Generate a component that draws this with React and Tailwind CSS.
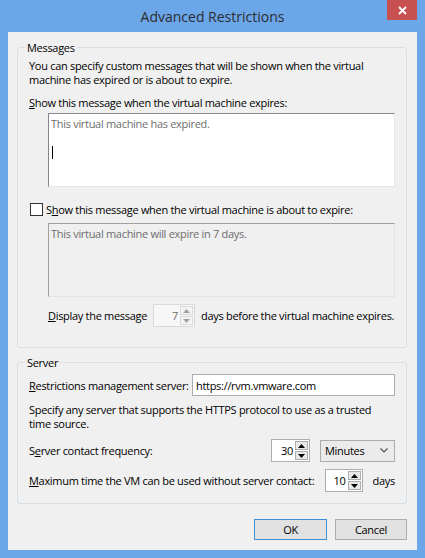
import React from "react";

function Spinner({ value, disabled, width }) {
  return (
    <div
      className={`flex h-[23px] border ${width} ${
        disabled ? "border-[#d9d9d9] bg-[#f7f7f7] text-[#6d6d6d]" : "border-[#abadb3] bg-white text-black"
      }`}
    >
      <div className="flex-1 flex items-center justify-end pr-[2px]">{value}</div>
      <div className="flex flex-col gap-[1px] py-[1px] pr-[1px] w-[14px]">
        {["up", "down"].map((d) => (
          <div
            key={d}
            className={`flex-1 flex items-center justify-center border ${
              disabled ? "border-[#d9d9d9] bg-[#f4f4f4]" : "border-[#acacac] bg-[#e8e8e8]"
            }`}
          >
            <svg width="7" height="4" viewBox="0 0 7 4">
              <path
                d={d === "up" ? "M0 4 L3.5 0 L7 4 Z" : "M0 0 L3.5 4 L7 0 Z"}
                fill={disabled ? "#a0a0a0" : "#000"}
              />
            </svg>
          </div>
        ))}
      </div>
    </div>
  );
}

export default function App() {
  return (
    <div className="w-[425px] h-[558px] overflow-hidden bg-[#6ba6e8] flex flex-col font-['Segoe_UI','Open_Sans',sans-serif] text-[11px] tracking-[-0.3px] leading-[15px] text-black whitespace-nowrap">
      {/* title bar */}
      <div className="h-[32px] relative flex items-center justify-center shrink-0">
        <span className="text-[14px] tracking-normal text-[#2d2d30]">Advanced Restrictions</span>
        <div className="absolute right-[8px] top-0 w-[30px] h-[20px] bg-[#c75050] flex items-center justify-center">
          <svg width="9" height="9" viewBox="0 0 9 9">
            <path d="M1 1 L8 8 M8 1 L1 8" stroke="#fff" strokeWidth="1.8" />
          </svg>
        </div>
      </div>

      {/* client area */}
      <div className="flex-1 mx-[8px] mb-[8px] bg-[#f0f0f0] pl-[9px] pr-[10px] pt-[8px] flex flex-col">
        {/* Messages */}
        <fieldset className="min-w-0 border border-[#d5dfe5] rounded-[3px] px-[11px] pb-[20px]">
          <legend className="ml-[-4px] px-[2px]">Messages</legend>
          <p className="mt-[4px] leading-[14px]">
            You can specify custom messages that will be shown when the virtual
            <br />
            machine has expired or is about to expire.
          </p>
          <div className="mt-[8px]">
            <u>S</u>how this message when the virtual machine expires:
          </div>
          <div className="mt-[3px] ml-[19px] h-[74px] bg-white border border-[#e3e9ef] border-t-[#828790] border-l-[#828790] px-[2px] pt-[2px] text-[#6d6d6d]">
            <div>This virtual machine has expired.</div>
            <div className="mt-[15px] w-[1px] h-[13px] bg-black ml-[1px]" />
          </div>
          <div className="mt-[15px] flex items-center">
            <div className="ml-[1px] w-[13px] h-[13px] border border-[#333] bg-white" />
            <span className="ml-[3px]">
              S<u>h</u>ow this message when the virtual machine is about to expire:
            </span>
          </div>
          <div className="mt-[6px] ml-[19px] h-[74px] bg-[#f0f0f0] border border-[#e3e3e3] border-t-[#a0a0a0] border-l-[#a0a0a0] px-[2px] pt-[2px] text-[#6d6d6d]">
            This virtual machine will expire in 7 days.
          </div>
          <div className="mt-[7px] ml-[19px] flex items-center">
            <span className="w-[105px]">
              <u>D</u>isplay the message
            </span>
            <Spinner value="7" disabled width="w-[42px]" />
            <span className="ml-[6px]">days before the virtual machine expires.</span>
          </div>
        </fieldset>

        {/* Server */}
        <fieldset className="min-w-0 mt-[7px] border border-[#d5dfe5] rounded-[3px] px-[11px] pb-[11px]">
          <legend className="ml-[-4px] px-[2px]">Server</legend>
          <div className="mt-[4px] flex items-center">
            <span className="w-[163px]">
              <u>R</u>estrictions management server:
            </span>
            <div className="flex-1 h-[22px] bg-white border border-[#abadb3] flex items-center px-[3px]">
              https://rvm.vmware.com
            </div>
          </div>
          <p className="mt-[7px] leading-[14px]">
            Specify any server that supports the HTTPS protocol to use as a trusted
            <br />
            time source.
          </p>
          <div className="mt-[8px] flex items-center">
            <span className="flex-1">
              S<u>e</u>rver contact frequency:
            </span>
            <Spinner value="30" width="w-[39px]" />
            <div className="ml-[10px] w-[75px] h-[22px] border border-[#acacac] bg-[#ebebeb] flex items-center justify-between pl-[4px] pr-[6px]">
              <span>Minutes</span>
              <svg width="8" height="5" viewBox="0 0 8 5">
                <path d="M0.5 0.5 L4 4 L7.5 0.5" stroke="#555" strokeWidth="1.2" fill="none" />
              </svg>
            </div>
          </div>
          <div className="mt-[7px] flex items-center">
            <span className="flex-1">
              <u>M</u>aximum time the VM can be used without server contact:
            </span>
            <Spinner value="10" width="w-[38px]" />
            <span className="ml-[10px]">days</span>
          </div>
        </fieldset>

        {/* buttons */}
        <div className="mt-[15px] flex justify-end gap-[8px]">
          <button className="w-[73px] h-[21px] bg-[#e1e1e1] border border-[#3c8fd8]">OK</button>
          <button className="w-[72px] h-[21px] bg-[#e1e1e1] border border-[#acacac]">Cancel</button>
        </div>
      </div>
    </div>
  );
}
